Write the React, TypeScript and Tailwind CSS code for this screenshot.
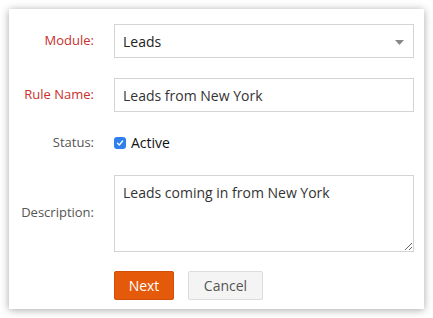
import React from "react";

export default function App() {
  return (
    <div className="w-[433px] h-[318px] bg-white pt-[9px] pl-[9px]" style={{ fontFamily: '"Open Sans", sans-serif' }}>
      <div className="w-[415px] h-[300px] bg-white shadow-[0_1px_8px_rgba(0,0,0,0.35)] pt-[15px]">
        <div className="grid grid-cols-[85px_300px] gap-x-[20px]">
          {/* Module */}
          <div className="flex items-center justify-end h-[34px] text-[13px] text-[#c9302c]">Module:</div>
          <div className="relative flex items-center h-[34px] border border-[#d4d4d4] bg-white pl-[8px] text-[14px] text-[#222]">
            Leads
            <svg className="absolute right-[9px] top-[15px]" width="9" height="5" viewBox="0 0 9 5">
              <path d="M0 0 L9 0 L4.5 5 Z" fill="#888" />
            </svg>
          </div>

          {/* Rule name */}
          <div className="mt-[20px] flex items-center justify-end h-[34px] text-[13px] text-[#c9302c]">Rule Name:</div>
          <div className="mt-[20px] flex items-center h-[34px] border border-[#d4d4d4] bg-white pl-[8px] text-[14px] text-[#333]">
            Leads from New York
          </div>

          {/* Status */}
          <div className="mt-[19px] flex items-center justify-end h-[23px] text-[13px] text-[#555]">Status:</div>
          <div className="mt-[19px] flex items-center h-[23px] text-[14px] text-[#111]">
            <span className="w-[12px] h-[12px] rounded-[3px] bg-[#2f7fef] flex items-center justify-center mr-[5px]">
              <svg width="8" height="8" viewBox="0 0 8 8">
                <path d="M1.5 4.2 L3.3 6 L6.6 2" stroke="white" strokeWidth="1.3" fill="none" strokeLinecap="round" strokeLinejoin="round" />
              </svg>
            </span>
            Active
          </div>

          {/* Description */}
          <div className="mt-[21px] flex items-center justify-end h-[76px] text-[13px] text-[#555]">Description:</div>
          <textarea
            className="mt-[21px] h-[77px] w-[300px] border border-[#d4d4d4] bg-white px-[8px] pt-[6px] text-[14px] text-[#333] outline-none"
            style={{ fontFamily: '"Open Sans", sans-serif' }}
            defaultValue="Leads coming in from New York"
          />

          {/* Buttons */}
          <div className="mt-[20px]" />
          <div className="mt-[19px] flex gap-[14px]">
            <button className="w-[60px] h-[29px] rounded-[2px] bg-[#e45a0a] border border-[#d45008] text-white text-[14px]">Next</button>
            <button className="w-[75px] h-[29px] rounded-[2px] bg-[#f4f4f4] border border-[#dcdcdc] text-[#555] text-[14px]">Cancel</button>
          </div>
        </div>
      </div>
    </div>
  );
}
